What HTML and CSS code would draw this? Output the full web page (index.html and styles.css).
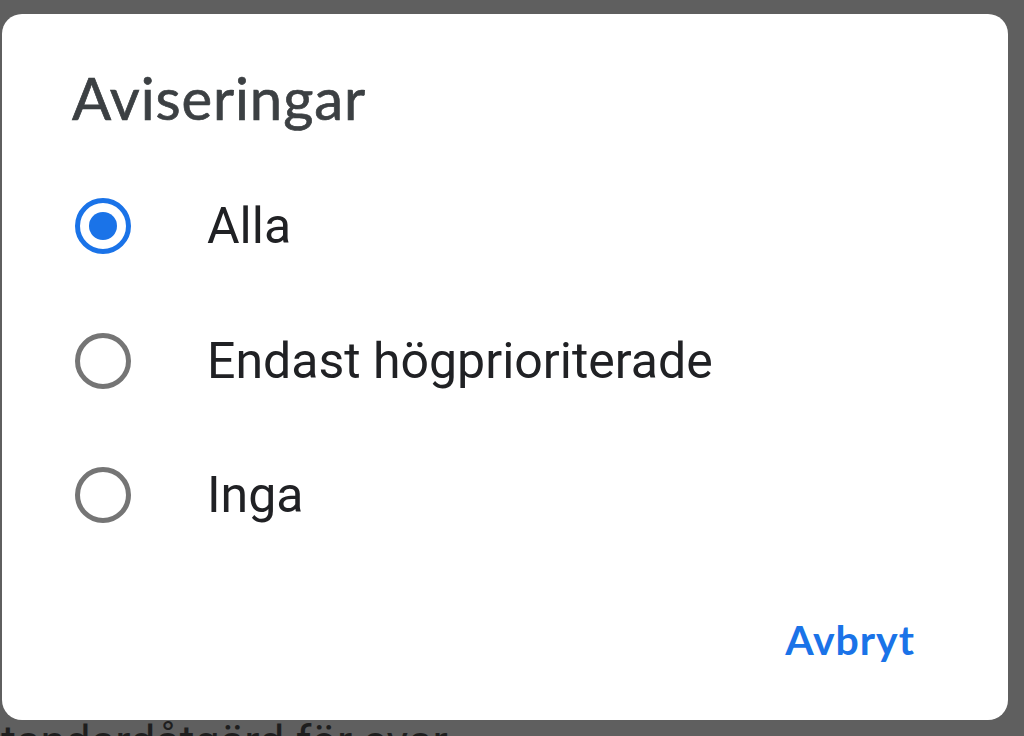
FILE: index.html
```html
<!DOCTYPE html>
<html lang="sv">
<head>
<meta charset="utf-8">
<link rel="stylesheet" href="styles.css">
</head>
<body>
<div class="screen">
  <div class="dialog">
    <h1 class="title">Aviseringar</h1>
    <div class="options">
      <div class="option">
        <span class="radio checked"><span class="dot"></span></span>
        <span class="label">Alla</span>
      </div>
      <div class="option">
        <span class="radio"></span>
        <span class="label">Endast högprioriterade</span>
      </div>
      <div class="option">
        <span class="radio"></span>
        <span class="label">Inga</span>
      </div>
    </div>
    <div class="actions">
      <span class="button">Avbryt</span>
    </div>
  </div>
  <div class="behind">standardåtgärd för svar</div>
</div>
</body>
</html>
```
FILE: styles.css
```css
html, body {
  margin: 0;
  padding: 0;
  background: #5f5f5f;
  overflow: hidden;
}
.screen {
  width: 1024px;
  height: 736px;
  display: flex;
  flex-direction: column;
  overflow: hidden;
}
.dialog {
  margin: 14px 16px 0 2px;
  height: 706px;
  flex: none;
  background: #ffffff;
  border-radius: 20px;
  display: flex;
  flex-direction: column;
  box-sizing: border-box;
  padding: 0 0 0 73px;
  position: relative;
  z-index: 1;
}
.title {
  margin: 0 0 0 -3px;
  padding-top: 52px;
  font-family: "Lato", "Open Sans", sans-serif;
  font-weight: 400;
  font-size: 58px;
  line-height: 64px;
  color: #3c4043;
  letter-spacing: 0.9px;
  -webkit-text-stroke: 0.7px #3c4043;
}
.options {
  margin-top: 29px;
  display: flex;
  flex-direction: column;
}
.option {
  height: 134.5px;
  display: flex;
  align-items: center;
}
.radio {
  width: 56px;
  height: 56px;
  box-sizing: border-box;
  border: 5px solid #757575;
  border-radius: 50%;
  display: flex;
  align-items: center;
  justify-content: center;
  flex: none;
}
.radio.checked {
  border-color: #1a73e8;
}
.dot {
  width: 28px;
  height: 28px;
  border-radius: 50%;
  background: #1a73e8;
}
.label {
  margin-left: 76px;
  font-family: "Roboto", sans-serif;
  font-size: 50px;
  color: #202124;
}
.actions {
  margin-top: auto;
  display: flex;
  justify-content: flex-end;
  padding: 0 93px 56px 0;
}
.button {
  font-family: "Lato", "Open Sans", sans-serif;
  font-weight: 700;
  font-size: 41px;
  line-height: 48px;
  color: #1a73e8;
  letter-spacing: 1px;
}
.behind {
  margin-left: -22px;
  margin-top: -4px;
  font-family: "Roboto", sans-serif;
  font-size: 45px;
  line-height: 52px;
  color: #1e1e1e;
  white-space: nowrap;
}
```
